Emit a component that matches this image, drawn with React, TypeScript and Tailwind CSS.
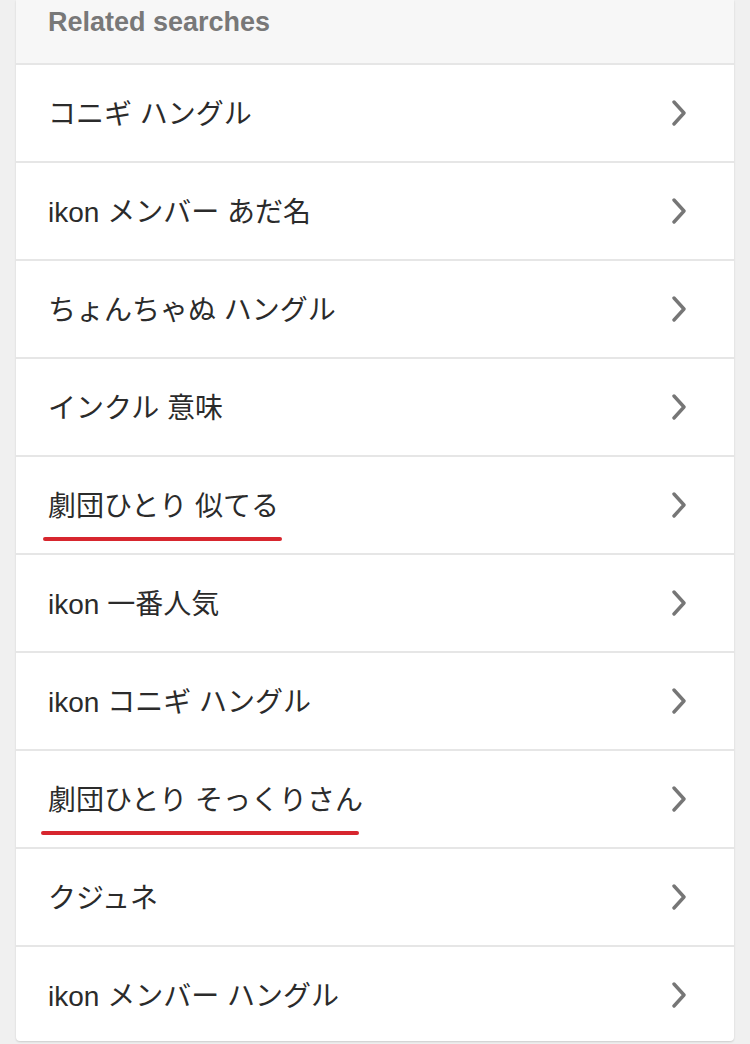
import React from 'react'

const items = [
  { label: 'コニギ ハングル' },
  { label: 'ikon メンバー あだ名' },
  { label: 'ちょんちゃぬ ハングル' },
  { label: 'インクル 意味' },
  { label: '劇団ひとり 似てる', mark: 'w-[239px] left-[43px]' },
  { label: 'ikon 一番人気' },
  { label: 'ikon コニギ ハングル' },
  { label: '劇団ひとり そっくりさん', mark: 'w-[318px] left-[41px]' },
  { label: 'クジュネ' },
  { label: 'ikon メンバー ハングル' },
]

function Chevron() {
  return (
    <svg width="16" height="26" viewBox="0 0 16 26" fill="none" aria-hidden>
      <polyline
        points="3,2 13,13 3,24"
        stroke="#767676"
        strokeWidth="3.4"
        strokeLinecap="round"
        strokeLinejoin="round"
      />
    </svg>
  )
}

export default function App() {
  return (
    <div
      className="min-h-[1044px] bg-[#f0f0f0] px-4"
      style={{ fontFamily: '"Liberation Sans", "Noto Sans CJK JP", sans-serif' }}
    >
      <div className="rounded-b bg-white shadow-[0_1px_2px_rgba(0,0,0,0.15)]">
        <div className="h-[65px] border-b-2 border-[#e6e6e6] bg-[#f7f7f7] pl-8 pt-[9px]">
          <h2 className="text-[27px] leading-none font-bold text-[#787878]">Related searches</h2>
        </div>
        {items.map((item, i) => (
          <a
            key={i}
            href="#"
            className={
              'relative flex items-center justify-between pl-8 pr-[47px] ' +
              (i < items.length - 1 ? 'h-[98px] border-b-2 border-[#e6e6e6]' : 'h-[94px] pt-[2px]')
            }
          >
            <span className="translate-y-[2px] text-[28px] leading-none text-[#2b2b2b]">{item.label}</span>
            <Chevron />
            {item.mark && (
              <span
                className={'absolute top-[80px] h-[4px] rounded-full bg-[#d7262e] -translate-x-4 ' + item.mark}
              />
            )}
          </a>
        ))}
      </div>
    </div>
  )
}
